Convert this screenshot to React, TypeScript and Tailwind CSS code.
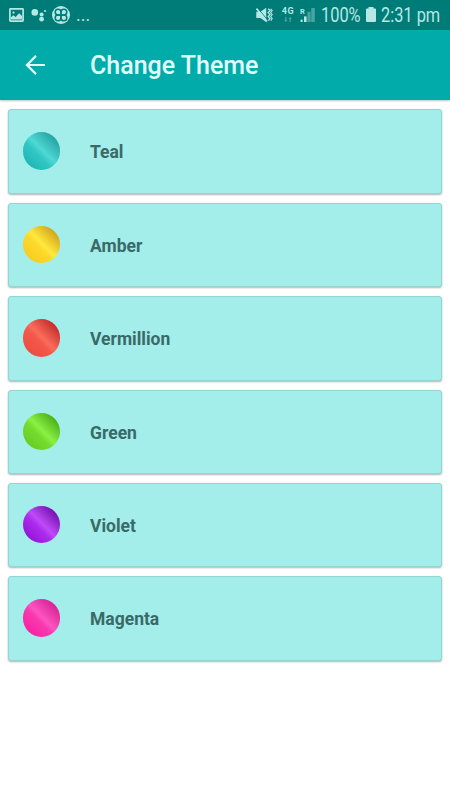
interface Theme {
  name: string;
  swatch: string;
}

const themes: Theme[] = [
  { name: 'Teal', swatch: 'bg-[linear-gradient(45deg,#16b0b0_0%,#30c6c4_40%,#4ed8d4_52%,#2cacac_80%,#168a8c_100%)]' },
  { name: 'Amber', swatch: 'bg-[linear-gradient(45deg,#f5c61a_0%,#fdd82a_42%,#ffe93c_52%,#d9b020_80%,#b98c12_100%)]' },
  { name: 'Vermillion', swatch: 'bg-[linear-gradient(45deg,#ea4840_0%,#f4584a_42%,#fa6c5a_52%,#c83430_82%,#a01616_100%)]' },
  { name: 'Green', swatch: 'bg-[linear-gradient(45deg,#60c81a_0%,#76dc30_42%,#8cf044_52%,#50b81c_82%,#389808_100%)]' },
  { name: 'Violet', swatch: 'bg-[linear-gradient(45deg,#8a08d0_0%,#ac2cec_42%,#c04af8_52%,#7c18b8_82%,#5c0898_100%)]' },
  { name: 'Magenta', swatch: 'bg-[linear-gradient(45deg,#f818a0_0%,#fa38ae_42%,#fc54c0_52%,#dc2898_82%,#c01080_100%)]' },
];

function StatusBar() {
  return (
    <div className="flex h-[30px] items-center bg-[#007c78] pl-[9px] text-[#b5e8e5]">
      <svg className="h-[14px] w-[15px] shrink-0" viewBox="0 0 15 14" fill="none">
        <rect x="0.9" y="0.9" width="13.2" height="12.2" rx="0.6" stroke="currentColor" strokeWidth="1.7" />
        <circle cx="4.5" cy="4.6" r="1.1" fill="currentColor" />
        <path d="M2 11.5V9.3L4.3 7.3L6.6 9L10.2 5.3L13 8V11.5Z" fill="currentColor" />
      </svg>
      <svg className="ml-[7px] h-[14px] w-[16px] shrink-0" viewBox="0 0 16 14" fill="currentColor">
        <circle cx="3.8" cy="4.4" r="3.3" />
        <circle cx="10.6" cy="6.4" r="2" />
        <circle cx="10.6" cy="11.2" r="2.4" />
        <circle cx="14" cy="3" r="1.1" />
      </svg>
      <svg className="ml-[5px] h-[18px] w-[18px] shrink-0" viewBox="0 0 18 18">
        <circle cx="9" cy="9" r="9" fill="currentColor" />
        <g fill="none" stroke="#007c78" strokeWidth="1.5">
          <path d="M9 9H5.9A2.9 2.9 0 1 1 9 5.9Z" />
          <path d="M9 9V5.9A2.9 2.9 0 1 1 12.1 9Z" />
          <path d="M9 9V12.1A2.9 2.9 0 1 1 5.9 9Z" />
          <path d="M9 9H12.1A2.9 2.9 0 1 1 9 12.1Z" />
        </g>
      </svg>
      <span className="ml-[6px] w-[16px] text-[18px] leading-[30px]">...</span>

      <svg className="ml-[163.5px] h-[16px] w-[17px] shrink-0" viewBox="0 0 17 16" fill="none" stroke="currentColor">
        <path d="M0.3 4.8H4.4L10.2 0.8V15L4.4 11H0.3Z" fill="currentColor" stroke="none" />
        <path d="M1.6 1L11.6 13" stroke="#007c78" strokeWidth="0.9" />
        <path d="M0.5 1.6L11 14.4" strokeWidth="1.6" />
        <path d="M12.2 1.8L14 3.6L12.2 5.6L14 7.6L12.2 9.6L14 11.6L12.4 13.6" strokeWidth="1.4" />
        <path d="M14.6 1.8L16.2 3.6L14.6 5.6L16.2 7.6L14.6 9.6L16.2 11.6L14.8 13.6" strokeWidth="1.1" />
      </svg>
      <div className="ml-[8.5px] flex h-[16px] w-[14px] flex-col items-center">
        <span className="text-[9px] leading-[9px] font-bold tracking-[0.6px]">4G</span>
        <svg className="mt-px h-[5px] w-[8px] shrink-0" viewBox="0 0 8 5" fill="#45a5a1">
          <path d="M0 3H1.2V0H2.5V3H3.7L1.8 5Z" />
          <path d="M4.3 2L6.2 0L8 2H6.8V5H5.5V2Z" />
        </svg>
      </div>
      <svg className="ml-[5px] h-[16px] w-[16px] shrink-0" viewBox="0 0 16 16">
        <text x="0" y="6.5" fontSize="7.5" fontWeight="700" fill="currentColor">R</text>
        <rect x="0.6" y="12.6" width="2" height="2.4" fill="currentColor" />
        <rect x="4" y="9.4" width="2.6" height="5.6" fill="currentColor" />
        <rect x="7.4" y="4.8" width="3.2" height="10.2" fill="#45a5a1" />
        <rect x="11.2" y="1" width="3.6" height="14" fill="#45a5a1" />
      </svg>
      <div className="mt-[2px] ml-[5px] w-[39px]">
        <span className="inline-block origin-left scale-x-[0.84] text-[19.5px] leading-[28px] whitespace-nowrap">100%</span>
      </div>
      <svg className="mb-[2px] ml-[5.5px] h-[15px] w-[10px] shrink-0" viewBox="0 0 10 15" fill="currentColor">
        <path d="M2.5 0H7.5V1.6H9Q10 1.6 10 2.6V14Q10 15 9 15H1Q0 15 0 14V2.6Q0 1.6 1 1.6H2.5Z" />
      </svg>
      <div className="mt-[2px] ml-[5.5px] w-[60px]">
        <span className="inline-block origin-left scale-x-[0.84] text-[19.5px] leading-[28px] whitespace-nowrap">2:31 pm</span>
      </div>
    </div>
  );
}

function AppBar() {
  return (
    <header className="flex h-[70px] items-center bg-[#00abaa] pl-[25px] text-[#e0ffff] shadow-[0_1px_2px_rgba(0,70,70,0.3)]">
      <svg className="h-5 w-5 shrink-0" viewBox="0 0 20 20" fill="none" stroke="currentColor" strokeWidth="2.2">
        <path d="M20 10H2.4M11 0.9L1.9 10L11 19.1" />
      </svg>
      <h1 className="ml-[45px] text-[25px] leading-none font-medium">Change Theme</h1>
    </header>
  );
}

function ThemeCard({ theme }: { theme: Theme }) {
  return (
    <li className="flex h-[84.4px] items-center rounded-[3px] border-[1.5px] border-[#93d6d1] bg-[#a3eeeb] pl-[13.5px] shadow-[0_1px_2px_rgba(0,0,0,0.3)]">
      <div className={`mb-px h-[37.5px] w-[37.5px] rounded-full ${theme.swatch}`} />
      <span className="mt-[3px] ml-[30px] text-[17.5px] leading-none font-bold text-[#3a6a68]">{theme.name}</span>
    </li>
  );
}

export default function App() {
  return (
    <div className="h-[800px] w-[450px] overflow-hidden bg-white font-['Roboto',sans-serif]">
      <StatusBar />
      <AppBar />
      <ul className="flex flex-col gap-[9px] pt-[9.4px] pr-[8px] pl-[8px]">
        {themes.map((theme) => (
          <ThemeCard key={theme.name} theme={theme} />
        ))}
      </ul>
    </div>
  );
}
